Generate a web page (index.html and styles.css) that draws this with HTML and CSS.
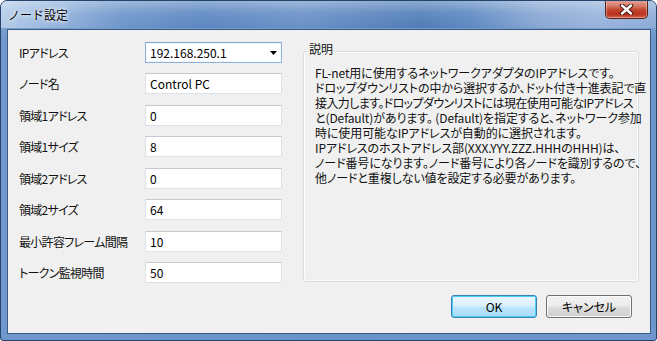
FILE: index.html
```html
<!DOCTYPE html>
<html lang="ja">
<head>
    <meta charset="UTF-8">
    <title>ノード設定</title>
    <link rel="stylesheet" href="styles.css">
</head>
<body>
<div class="window">
    <div class="titlebar">
        <span class="title">ノード設定</span>
        <button class="close-btn" aria-label="閉じる">
            <svg width="17" height="11" viewBox="0 0 17 11">
                <path d="M4 1.5 L13 9.5 M13 1.5 L4 9.5" stroke="#4a1810" stroke-width="4.4" stroke-linecap="round"/>
                <path d="M4 1.5 L13 9.5 M13 1.5 L4 9.5" stroke="#fff" stroke-width="2.4" stroke-linecap="round"/>
            </svg>
        </button>
    </div>

    <div class="client">
        <div class="content">
            <div class="form">
                <label class="field-label">IPアドレス</label>
                <div class="combo">
                    <span>192.168.250.1</span>
                    <svg class="combo-arrow" width="7" height="4" viewBox="0 0 7 4"><path d="M0 0 H7 L3.5 4 Z" fill="#000"/></svg>
                </div>

                <label class="field-label">ノード名</label>
                <input class="text-box" type="text" value="Control PC">

                <label class="field-label">領域1アドレス</label>
                <input class="text-box" type="text" value="0">

                <label class="field-label">領域1サイズ</label>
                <input class="text-box" type="text" value="8">

                <label class="field-label">領域2アドレス</label>
                <input class="text-box" type="text" value="0">

                <label class="field-label">領域2サイズ</label>
                <input class="text-box" type="text" value="64">

                <label class="field-label">最小許容フレーム間隔</label>
                <input class="text-box" type="text" value="10">

                <label class="field-label">トークン監視時間</label>
                <input class="text-box" type="text" value="50">
            </div>

            <fieldset class="group-box">
                <legend class="group-title">説明</legend>
                <p class="description">
                    FL-net用に使用するネットワークアダプタのIPアドレスです。<br>
                    ドロップダウンリストの中から選択するか、ドット付き十進表記で直<br>
                    <span class="tight">接入力します。ドロップダウンリストには現在使用可能なIPアドレス</span><br>
                    と(Default)があります。 (Default)を指定すると、ネットワーク参加<br>
                    時に使用可能なIPアドレスが自動的に選択されます。<br>
                    IPアドレスのホストアドレス部(XXX.YYY.ZZZ.HHHのHHH)は、<br>
                    ノード番号になります。ノード番号により各ノードを識別するので、<br>
                    他ノードと重複しない値を設定する必要があります。
                </p>
            </fieldset>
        </div>

        <div class="buttons">
            <button class="dlg-btn default">OK</button>
            <button class="dlg-btn">キャンセル</button>
        </div>
    </div>
</div>
</body>
</html>
```

FILE: styles.css
```css
* {
    box-sizing: border-box;
}
body {
    margin: 0;
    background: #fff;
    font-family: "Noto Sans CJK JP", "Noto Sans", sans-serif;
    font-feature-settings: "palt";
    font-size: 12px;
    color: #000;
}
.window {
    width: 657px;
    height: 341px;
    border: 1px solid #25446c;
    border-radius: 7px 7px 3px 3px;
    padding: 0 5px 6px 6px;
    display: flex;
    flex-direction: column;
    background:
        linear-gradient(180deg, rgba(255,255,255,0.25) 0, rgba(255,255,255,0) 40px),
        linear-gradient(90deg, #6f97cb 0, #6a93c8 50%, #6e96cb 100%);
    overflow: hidden;
}
.titlebar {
    height: 27px;
    display: flex;
    justify-content: space-between;
    align-items: flex-start;
    margin: 0 -5px 0 -6px;
    padding: 0 8px 0 7px;
    background:
        linear-gradient(180deg, rgba(255,255,255,0.35) 0, rgba(255,255,255,0.1) 12px, rgba(255,255,255,0) 27px),
        linear-gradient(90deg, #b5cce8 0, #9bb9e0 40px, #6d95ca 120px, #5a86c0 200px, #6990c7 300px, #4f7cb6 420px, #5d89c2 470px, #8aa8d4 540px, #98b4dc 600px, #8aaad6 657px);
}
.title {
    margin-top: 6px;
    font-size: 12px;
    line-height: 16px;
    font-feature-settings: normal;
    color: #000;
    text-shadow: 0 0 6px #fff, 0 0 3px #fff;
}
.close-btn {
    width: 43px;
    height: 19px;
    margin-top: -1px;
    padding: 0;
    border: 1px solid #5a1f17;
    border-top: none;
    border-radius: 0 0 5px 5px;
    display: flex;
    align-items: center;
    justify-content: center;
    background: linear-gradient(180deg, #e6a99d 0, #d37764 35%, #c2432c 55%, #b9341f 80%, #d4664c 100%);
    box-shadow: inset 0 0 0 1px rgba(255,255,255,0.35);
}
.client {
    flex: 1;
    min-width: 0;
    margin-top: 1px;
    border: 1px solid #3a5a86;
    background: #f0f0f0;
    padding: 12px 11px 15px 11px;
    display: flex;
    flex-direction: column;
}
.content {
    display: flex;
    gap: 21px;
    height: 240px;
    min-width: 0;
}
.form {
    flex: none;
    display: grid;
    grid-template-columns: 126px 137px;
    grid-auto-rows: 21px;
    row-gap: 10.43px;
    align-items: center;
}
.field-label {
    line-height: 21px;
    white-space: nowrap;
    letter-spacing: -0.7px;
    color: #111;
}
.text-box, .combo {
    height: 21px;
    width: 137px;
    margin: 0;
    padding: 0 4px;
    font: inherit;
    font-size: 12px;
    color: #000;
    background: #fff;
    border: 1px solid #dde2e8;
    border-top-color: #c5c9d0;
    outline: none;
}
.combo {
    display: flex;
    align-items: center;
    justify-content: space-between;
    padding-right: 4px;
    border: 1px solid #8db2dc;
    border-top-color: #7ea4d2;
    box-shadow: inset 0 0 0 1px #f4f8fc;
}
.group-box {
    flex: 1;
    min-width: 0;
    margin: 0;
    padding: 5px 8px 0 11px;
    border: 1px solid #d5dfe5;
    border-radius: 3px;
    box-shadow: inset 0 0 0 1px #fbfcfc;
}
.group-title {
    padding: 0 2px 5px;
    margin-left: -8px;
    line-height: 13px;
    color: #111;
}
.description {
    margin: 0;
    line-height: 15px;
    white-space: nowrap;
    letter-spacing: -0.1px;
    color: #111;
}
.tight {
    letter-spacing: -0.6px;
}
.buttons {
    margin-top: 13px;
    padding-right: 7px;
    display: flex;
    justify-content: flex-end;
    gap: 9px;
}
.dlg-btn {
    width: 86px;
    height: 23px;
    padding: 0;
    font: inherit;
    font-size: 12px;
    color: #000;
    border: 1px solid #707070;
    border-radius: 3px;
    background: linear-gradient(180deg, #f2f2f2 0, #ebebeb 48%, #dddddd 52%, #cfcfcf 100%);
    box-shadow: inset 0 0 0 1px #fcfcfc;
}
.dlg-btn.default {
    border-color: #3c7fb1;
    box-shadow: inset 0 0 0 1px #48d0f6;
    background: linear-gradient(180deg, #eaf6fd 0, #d9f0fc 48%, #bee6fd 52%, #a7d9f5 100%);
}
```
